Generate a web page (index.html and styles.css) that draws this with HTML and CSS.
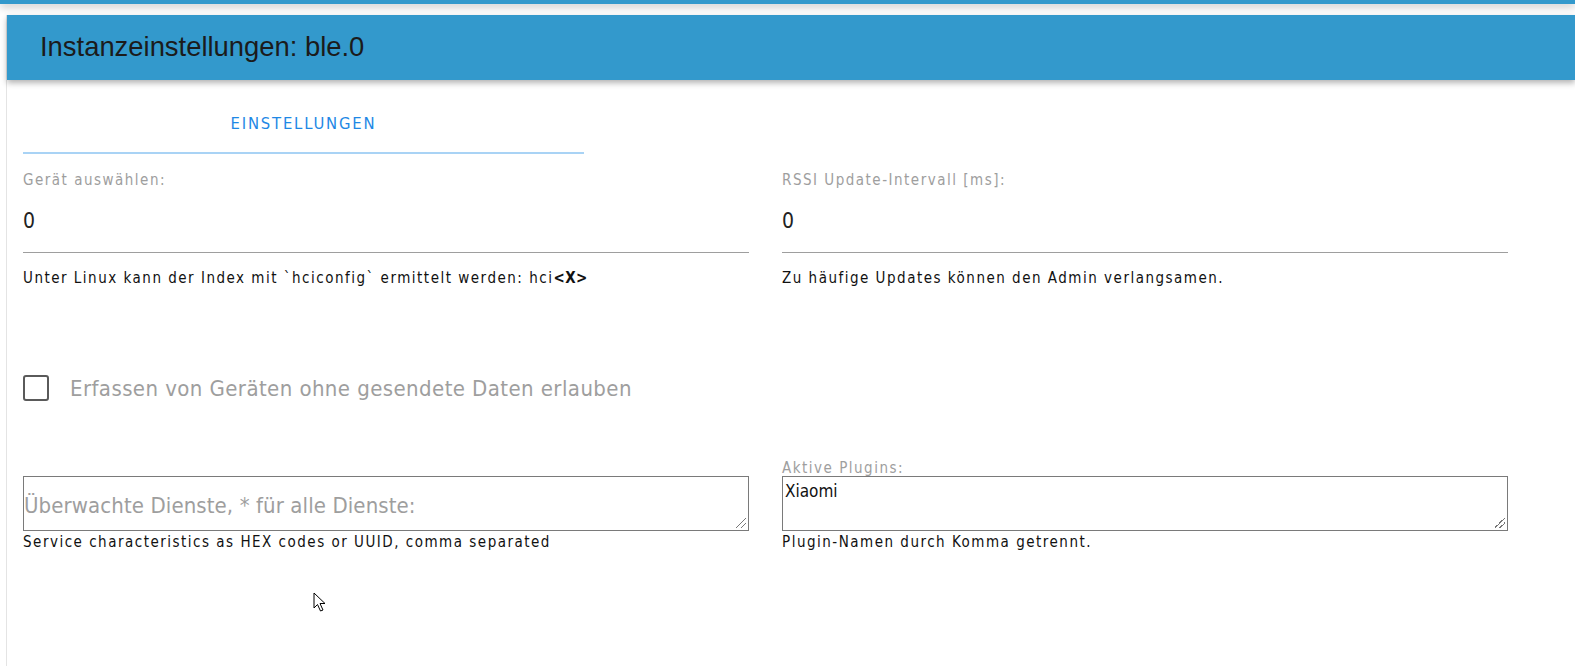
FILE: index.html
```html
<!DOCTYPE html>
<html lang="de">
<head>
<meta charset="utf-8">
<title>Instanzeinstellungen: ble.0</title>
<link rel="stylesheet" href="styles.css">
</head>
<body>
<div class="topbar"></div>
<div class="card">
  <div class="card-header"><h1 class="title">Instanzeinstellungen: ble.0</h1></div>
  <div class="card-body">
    <div class="tabs">
      <div class="tab">EINSTELLUNGEN</div>
    </div>
    <div class="row two">
      <div class="field">
        <div class="label">Gerät auswählen:</div>
        <div class="input">0</div>
        <div class="help">Unter Linux kann der Index mit `hciconfig` ermittelt werden: hci<b>&lt;X&gt;</b></div>
      </div>
      <div class="field">
        <div class="label">RSSI Update-Intervall [ms]:</div>
        <div class="input">0</div>
        <div class="help">Zu häufige Updates können den Admin verlangsamen.</div>
      </div>
    </div>
    <div class="row check-row">
      <span class="checkbox"></span>
      <span class="check-label">Erfassen von Geräten ohne gesendete Daten erlauben</span>
    </div>
    <div class="row two areas">
      <div class="field">
        <div class="label small hidden">&nbsp;</div>
        <div class="textarea"><span class="placeholder">Überwachte Dienste, * für alle Dienste:</span><span class="grip"></span></div>
        <div class="help tight">Service characteristics as HEX codes or UUID, comma separated</div>
      </div>
      <div class="field">
        <div class="label small">Aktive Plugins:</div>
        <div class="textarea"><span class="value">Xiaomi</span><span class="grip"></span></div>
        <div class="help tight">Plugin-Namen durch Komma getrennt.</div>
      </div>
    </div>
  </div>
</div>
<svg class="cursor" width="14" height="22" viewBox="0 0 14 22"><path d="M1 1 L1 16 L4.5 12.5 L7.5 19 L10 18 L7 11.5 L12 11.5 Z" fill="#fff" stroke="#000" stroke-width="1"/></svg>
</body>
</html>
```
FILE: styles.css
```css
html, body {
  margin: 0;
  padding: 0;
  background: #fff;
  font-family: "DejaVu Sans Condensed", "DejaVu Sans", sans-serif;
  font-stretch: condensed;
  overflow: hidden;
}
body {
  width: 1575px;
  height: 666px;
  position: relative;
}
.topbar {
  height: 4px;
  background: #3399cc;
  box-shadow: 0 2px 8px rgba(0,0,0,0.35);
  position: relative;
  z-index: 2;
}
.card {
  margin: 11px 0 0 6px;
  border-left: 1px solid #e4e4e4;
  height: 651px;
}
.card-header {
  background: #3399cc;
  height: 65px;
  display: flex;
  align-items: center;
  padding-left: 33px;
  box-shadow: 0 3px 6px rgba(0,0,0,0.3);
  position: relative;
}
.title {
  margin: 0;
  font-family: "Liberation Sans", Arial, sans-serif;
  font-stretch: normal;
  font-weight: normal;
  font-size: 27.4px;
  color: #1b1b1b;
  padding-bottom: 1px;
}
.card-body {
  padding: 0 16px;
}
.tabs {
  width: 561px;
  height: 74px;
  border-bottom: 2px solid #a9d3f5;
  box-sizing: border-box;
  display: flex;
  justify-content: center;
  align-items: center;
}
.tab {
  color: #1e88e5;
  font-size: 16.5px;
  letter-spacing: 1.8px;
  padding-top: 14px;
}
.row.two {
  display: grid;
  grid-template-columns: 726px 726px;
  column-gap: 33px;
}
.field { display: flex; flex-direction: column; }
.label {
  color: #9e9e9e;
  font-size: 15px;
  letter-spacing: 1.5px;
  margin-top: 16px;
  line-height: 20px;
}
.input {
  font-size: 21px;
  color: #222;
  line-height: 40px;
  padding-top: 11px;
  border-bottom: 1px solid #9e9e9e;
  box-sizing: content-box;
  height: 51px;
}
.help {
  font-size: 15px;
  letter-spacing: 1.5px;
  color: #111;
  margin-top: 15px;
  line-height: 20px;
}
.help b { font-weight: bold; letter-spacing: 0.5px; }
.check-row {
  display: flex;
  align-items: center;
  margin-top: 80px;
  height: 40px;
}
.checkbox {
  width: 22px;
  height: 22px;
  border: 2px solid #5a5a5a;
  border-radius: 3px;
  box-sizing: content-box;
  margin-right: 21px;
}
.check-label {
  color: #9e9e9e;
  font-size: 22px;
  letter-spacing: 0.42px;
}
.areas { margin-top: 52px; }
.areas .label.small { margin-top: 0; height: 16px; line-height: 16px; font-size: 15px; }
.label.hidden { visibility: hidden; }
.textarea {
  position: relative;
  height: 55px;
  border: 1px solid #7a7a7a;
  box-sizing: border-box;
}
.placeholder {
  position: absolute;
  left: 0;
  top: 14px;
  color: #9e9e9e;
  font-size: 22px;
  letter-spacing: 0.1px;
  line-height: 30px;
}
.value {
  position: absolute;
  left: 2px;
  top: 2px;
  font-size: 17px;
  line-height: 24px;
  color: #111;
}
.grip {
  position: absolute;
  right: 2px;
  bottom: 2px;
  width: 10px;
  height: 10px;
  background: linear-gradient(135deg, transparent 45%, #777 45%, #777 52%, transparent 52%, transparent 70%, #777 70%, #777 77%, transparent 77%);
}
.help.tight { margin-top: 1px; }
.cursor {
  position: absolute;
  left: 313px;
  top: 592px;
}
```
